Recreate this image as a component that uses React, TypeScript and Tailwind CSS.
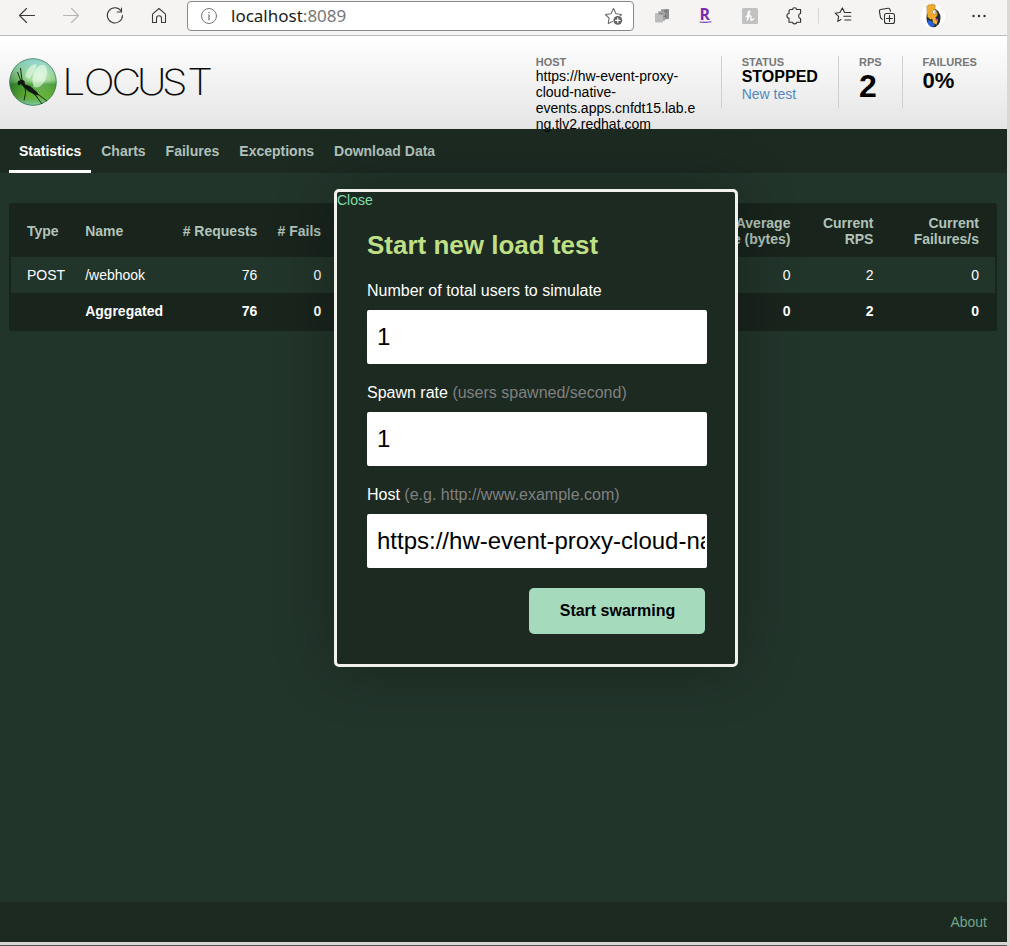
import React from "react";

const strokeProps = { fill: "none", strokeLinecap: "round", strokeLinejoin: "round" } as const;

function Toolbar() {
  return (
    <div className="flex h-9 w-full shrink-0 items-start border-b border-[#bdbdbd] bg-[#f5f4f3]">
      <svg className="h-8 w-[187px] shrink-0" viewBox="0 0 187 32" {...strokeProps} stroke="#3b3b3b" strokeWidth="1.1">
        <path d="M34.5 15.5H19.5M26.5 8.5l-7 7 7 7" />
        <path d="M63.5 15.5h15M71.5 8.5l7 7-7 7" stroke="#b4b4b4" />
        <path d="M121.3 11.2A7.6 7.6 0 1 0 122.5 15.5M121.5 8v4h-4.3" />
        <path d="M152.5 14.2l6.5-5.7 6.5 5.7v8.3h-4v-4.2a2.5 2.5 0 0 0-5 0v4.2h-4z" />
      </svg>
      <div className="mt-px flex h-[30px] w-[447px] shrink-0 items-center rounded border border-[#8a8a8a] bg-white pr-2 pl-3">
        <svg className="h-[18px] w-[18px]" viewBox="0 0 18 18" {...strokeProps} stroke="#777" strokeWidth="1">
          <circle cx="9" cy="9" r="7.5" />
          <path d="M9 8v4.8M9 5.3v.4" strokeWidth="1.3" />
        </svg>
        <span className="ml-[13px] flex-1 font-['Noto_Sans',sans-serif] text-[17px] leading-7 text-[#1b1b1b]">
          localhost<span className="text-[#767676]">:8089</span>
        </span>
        <svg className="h-5 w-5" viewBox="0 0 20 20" {...strokeProps} stroke="#6a6a6a" strokeWidth="1.1">
          <path d="M7.5 15.5l-4.2 1.9.8-5.2L.5 8.5l5.5-.7L8.5 2.5 11 7.8l5.5.7-1.3 1.3" />
          <circle cx="12.8" cy="14.3" r="4.4" fill="#626262" stroke="none" />
          <path d="M12.8 12v4.6M10.5 14.3h4.6" stroke="#fff" strokeWidth="1.2" />
        </svg>
      </div>
      <svg className="h-8 w-[373px] shrink-0" viewBox="634 0 373 32" {...strokeProps} stroke="#303030" strokeWidth="1.1">
        <g stroke="none">
          <path d="M661 9.5l7-.5q1 0 1 1v8q0 1-1 1l-7 1z" fill="#8c8c8c" />
          <path d="M658 11.5l6-1q1 0 1 1v9l-7 1z" fill="#a5a5a5" />
          <rect x="655" y="13" width="8" height="9.5" rx="1" fill="#bcbcbc" />
          <path d="M659 13h4v1.5h-4zM664 10.5h3V12h-3zM663.5 15.5h3V17h-3z" fill="#666" opacity=".6" />
        </g>
        <text x="699.6" y="19.8" textLength="10.5" lengthAdjust="spacingAndGlyphs" className="font-['Open_Sans',sans-serif] text-[15.5px] font-bold" fill="#7b2cab" stroke="none">R</text>
        <path d="M700 22q5 .8 11-.2" stroke="#6b3bc1" strokeWidth="1.1" />
        <rect x="742" y="8" width="16" height="16" rx="1.5" fill="#c1c1c1" stroke="none" />
        <path d="M746 16.8c3.2-1.8 4.6-4.6 3.5-5.6-1.6-.8-1.9 4.6-2.1 9 .9-3.6 2.2-4.8 3.2-4.3 1.4.7-.7 4.3.9 4.5 1.1.1 1.7-1.2 2-1.8" stroke="#fff" strokeWidth="1.3" />
        <path d="M791.2 9.5h1.4c0-2.4 4-2.4 4 0h4v4c-2.6-.2-2.6 5.2 0 5v3.7h-3.9c0 2.2-4.1 2.2-4.1 0H789v-4c-2.8 0-2.8-4.7 0-4.7v-2.2q0-1.8 2.2-1.8z" />
        <path d="M818.5 8v15" stroke="#d7d7d7" />
        <path d="M841 19.5l-3.2 1.9.8-5-3.5-3.2 4.8-.7 2.5-4.6 2.2 4.6h6.2M843.8 16.3h7M844.8 20h6" />
        <path d="M882.3 19.2l-1-.7q-.7-.6-.9-1.7l-1-5.6q-.1-1.3 1.2-1.7l7.6-1.3q1.4-.1 1.8 1.2l.4 1.9" />
        <rect x="884.5" y="13.5" width="10" height="10" rx="2" />
        <path d="M889.5 15.5v6M886.5 18.5h6" />
        <circle cx="933" cy="16" r="12" fill="#fff" stroke="none" />
        <ellipse cx="933.5" cy="18" rx="7" ry="9.3" fill="#222a38" stroke="none" />
        <path d="M927 6.300l1.800-1.500 1.500.3 1.500-1 1.700.3 1.700.6-.2 5 2.500 3-.5 3-2.500 2.500-4.500.8-2.500-2.500z" fill="#edac2c" stroke="#9c6a19" strokeWidth=".5" />
        <circle cx="934.3" cy="12" r="2.100" fill="#fff" stroke="#97753c" strokeWidth=".6" />
        <circle cx="935" cy="12" r=".5" fill="#222" stroke="none" />
        <path d="M932 17.500l3 .2 3 2-1.500 5-3.500-2z" fill="#f1b235" stroke="none" />
        <path d="M927.500 20l3.500 1 3.500 3-.5 2.500-3 .5-3-3z" fill="#2962d8" stroke="none" />
        <path d="M936 18.500l1.500.5-1 2-1-1z" fill="#c0308b" stroke="none" />
        <g fill="#303030" stroke="none">
          <circle cx="973.5" cy="16" r="1.2" /><circle cx="979" cy="16" r="1.2" /><circle cx="984.5" cy="16" r="1.2" />
        </g>
      </svg>
    </div>
  );
}

function Logo() {
  return (
    <svg className="mt-5 ml-[7px] h-[52px] w-[210px] shrink-0" viewBox="7 56 210 52">
      <defs>
        <radialGradient id="orb" cx=".64" cy=".35" r=".68">
          <stop offset="0" stopColor="#ddf7d2" />
          <stop offset=".4" stopColor="#8dce7c" />
          <stop offset=".76" stopColor="#4c9a35" />
          <stop offset="1" stopColor="#226438" />
        </radialGradient>
        <linearGradient id="sheen" x1="0" y1="0" x2="0" y2="1">
          <stop offset="0" stopColor="#8fd5df" stopOpacity=".9" />
          <stop offset=".45" stopColor="#b6e4bd" stopOpacity=".3" />
          <stop offset=".55" stopColor="#207d16" stopOpacity=".5" />
          <stop offset=".8" stopColor="#72bd2a" stopOpacity=".5" />
          <stop offset="1" stopColor="#86dcba" stopOpacity=".9" />
        </linearGradient>
      </defs>
      <circle cx="33" cy="82" r="23.5" fill="url(#orb)" />
      <circle cx="33" cy="82" r="23.3" fill="url(#sheen)" stroke="#3c7a5c" strokeWidth=".7" />
      <path d="M34 87C30 76 35 66 43 64.5c5 2 5.500 10 2 16-3 6-7 8-11 6.500z" fill="#efffec" opacity=".6" />
      <path d="M25.500 77c0-5 4-12 10-13 3 1-2 8-6 15z" fill="#efffec" opacity=".55" />
      <path d="M17.500 84l.5-3 4-1.500 2.500 1.500.5 3.500 5 1.500 7.500 6.500 1.500 3-4-1-6.500-3-5.500-5-2-2.500-2 1.500z" fill="#101810" />
      <path d="M20.500 80l-3-8M22 80l-1.500-12M25 85.500l.5 8-1.500 7M33 92l9 12M35 92l12 9M31 91.500l7 6" fill="none" stroke="#101810" strokeWidth=".9" />
      <text transform="scale(1.14 1)" y="95" x="54.5 73.400 97.900 120 142.200 164.300" fill="#0b0b0b" className="font-['Inter',sans-serif] text-[36px] font-extralight">LOCUST</text>
    </svg>
  );
}

function StatBox({ label, first, className, children }: { label: string; first?: boolean; className: string; children: React.ReactNode }) {
  return (
    <div className={`mt-5 h-[52px] shrink-0 ${first ? "" : "border-l border-[#d0d0d0]"} ${className}`}>
      <div className="h-3 text-[11px] leading-3 font-bold text-[#777]">{label}</div>
      {children}
    </div>
  );
}

function Header() {
  return (
    <header className="flex h-[93px] shrink-0 justify-between bg-linear-to-b from-white to-[#e5e5e5] text-black">
      <Logo />
      <div className="flex">
        <StatBox label="HOST" first className="relative w-[185.3px]">
          <div className="w-[162px] text-sm leading-4 break-all">
            https://hw-event-proxy-<br />cloud-native-<br />events.apps.cnfdt15.lab.e<br />ng.tlv2.redhat.com
          </div>
        </StatBox>
        <StatBox label="STATUS" className="w-[117px] pl-[19.7px]">
          <div className="text-base leading-[18px] font-bold">STOPPED</div>
          <a className="block text-sm leading-4 text-[#5289bf]">New test</a>
        </StatBox>
        <StatBox label="RPS" className="w-16 pl-5">
          <div className="text-[32px] leading-9 font-bold">2</div>
        </StatBox>
        <StatBox label="FAILURES" className="w-[105px] pl-[19.5px]">
          <div className="text-[22px] leading-[26px] font-bold">0%</div>
        </StatBox>
      </div>
    </header>
  );
}

const tabs = ["Statistics", "Charts", "Failures", "Exceptions", "Download Data"];
const widths = [64.2, 95, 97.2, 63.8, 369.3, 100, 83, 111.5];
const heads = ["Type", "Name", "# Requests", "# Fails", "", "Average size (bytes)", "Current RPS", "Current Failures/s"];
const rows = [
  ["POST", "/webhook", "76", "0", "", "0", "2", "0"],
  ["", "Aggregated", "76", "0", "", "0", "2", "0"],
];

function cellClass(i: number) {
  if (i === 0) return "pl-4 text-left";
  if (i === 1) return "pl-2.5 text-left";
  if (i === 2 || i === 3) return "px-2.5 text-right whitespace-nowrap";
  if (i === 7) return "pl-6 pr-4 text-right";
  return "px-2.5 text-right";
}

function StatsTable() {
  return (
    <div className="mt-[30px] mr-2.5 ml-[9px] rounded-[3px] bg-[#19241d] p-0.5 text-sm leading-4">
      <table className="w-[984px] table-fixed border-collapse">
        <colgroup>{widths.map((w, i) => <col key={i} style={{ width: w }} />)}</colgroup>
        <thead>
          <tr className="h-[52px] text-[#b1c3b9]">
            {heads.map((h, i) => <th key={i} className={`align-middle font-bold ${cellClass(i)}`}>{h}</th>)}
          </tr>
        </thead>
        <tbody>
          {rows.map((r, n) => (
            <tr key={n} className={n === 0 ? "h-9 bg-[#22352b]" : "h-9 font-bold"}>
              {r.map((v, i) => <td key={i} className={cellClass(i)}>{v}</td>)}
            </tr>
          ))}
        </tbody>
      </table>
    </div>
  );
}

function Field({ label, hint, value }: { label: string; hint?: string; value: string }) {
  return (
    <label className="mb-5 block">
      <span className="block h-[18px] text-base leading-[18px]">
        {label} {hint && <span className="text-[#808080]">{hint}</span>}
      </span>
      <div className="mt-2.5 flex h-[54px] w-[340px] items-center rounded-xs bg-white pr-0.5 pl-2.5 text-2xl text-black">
        <span className="w-full overflow-hidden whitespace-nowrap">{value}</span>
      </div>
    </label>
  );
}

function Dialog() {
  return (
    <div className="absolute top-[189px] left-[334px] h-[478px] w-[404px] rounded-[5px] border-[3px] border-[#f0f0ed] bg-[#1c2a22] shadow-[0_0_60px_rgba(0,0,0,0.3)]">
      <a className="block h-4 text-sm leading-4 text-[#80dfa8]">Close</a>
      <div className="px-[30px] pt-[22px]">
        <h2 className="mb-[23px] h-[29px] text-[26px] leading-[30px] font-bold text-[#bfdf85]">Start new load test</h2>
        <Field label="Number of total users to simulate" value="1" />
        <Field label="Spawn rate" hint="(users spawned/second)" value="1" />
        <Field label="Host" hint="(e.g. http://www.example.com)" value="https://hw-event-proxy-cloud-na" />
        <button className="ml-[162px] h-[46px] w-44 rounded-[5px] bg-[#a5dabd] pl-px text-base font-bold text-black">Start swarming</button>
      </div>
    </div>
  );
}

export default function App() {
  return (
    <div className="relative flex h-[946px] w-[1010px] flex-col overflow-hidden border-r-[3px] border-[#d9d8d3] bg-[#22352b] font-['Liberation_Sans',Arial,sans-serif] text-white">
      <Toolbar />
      <Header />
      <nav className="flex h-11 shrink-0 bg-[#1c2a22] pl-[9px] text-sm font-bold">
        {tabs.map((t, i) => (
          <a key={t} className={i === 0 ? "h-11 border-b-[3px] border-white px-2.5 leading-[44px]" : "px-2.5 leading-[44px] text-[#b1c1b9]"}>{t}</a>
        ))}
      </nav>
      <main className="flex-1 bg-[#22352b]"><StatsTable /></main>
      <footer className="flex h-10 shrink-0 items-center justify-end bg-[#1c2a22] pr-5 text-sm text-[#6fa68a]">About</footer>
      <div className="h-[3px] shrink-0 bg-[#d9d5d3]" />
      <div className="h-px shrink-0 bg-[#555]" />
      <Dialog />
    </div>
  );
}
